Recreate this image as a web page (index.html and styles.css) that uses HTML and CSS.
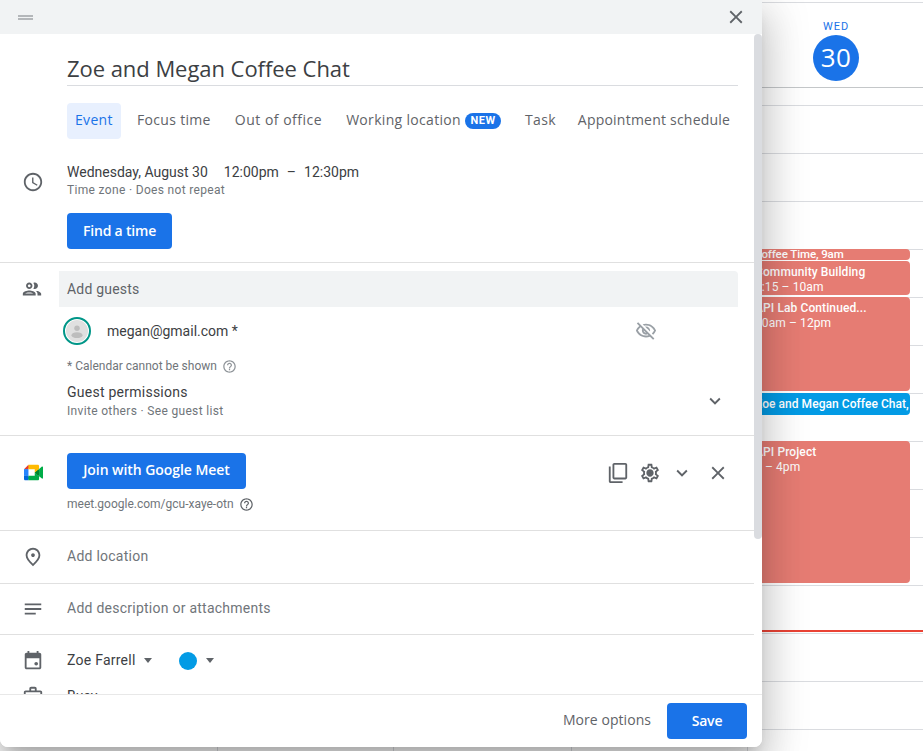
FILE: index.html
```html
<!DOCTYPE html>
<html lang="en">
<head>
<meta charset="utf-8">
<title>Zoe and Megan Coffee Chat</title>
<link rel="stylesheet" href="styles.css">
</head>
<body>
<svg class="sprite" aria-hidden="true">
  <symbol id="i-close" viewBox="0 0 24 24"><path d="M19 6.41L17.59 5 12 10.59 6.41 5 5 6.41 10.59 12 5 17.59 6.41 19 12 13.41 17.59 19 19 17.59 13.41 12z"/></symbol>
  <symbol id="i-chevron" viewBox="0 0 24 24"><path d="M7.41 8.59L12 13.17l4.59-4.58L18 10l-6 6-6-6z"/></symbol>
  <symbol id="i-help" viewBox="0 0 24 24"><path d="M11 18h2v-2h-2v2zm1-16C6.48 2 2 6.48 2 12s4.48 10 10 10 10-4.48 10-10S17.52 2 12 2zm0 18c-4.41 0-8-3.59-8-8s3.59-8 8-8 8 3.59 8 8-3.59 8-8 8zm0-14c-2.21 0-4 1.79-4 4h2c0-1.1.9-2 2-2s2 .9 2 2c0 2-3 1.75-3 5h2c0-2.25 3-2.5 3-5 0-2.21-1.79-4-4-4z"/></symbol>
</svg>

<div class="calendar">
  <header class="cal-head">
    <div class="today">
      <span class="today-day">WED</span>
      <span class="today-num">30</span>
    </div>
  </header>
  <div class="days">
    <div class="day"></div>
    <div class="day"></div>
    <div class="day"></div>
    <div class="day day-wed">
      <div class="event event-coffee"><b>Coffee Time, 9am</b></div>
      <div class="event event-community"><b>Community Building</b><span>9:15 – 10am</span></div>
      <div class="event event-lab"><b>API Lab Continued...</b><span>10am – 12pm</span></div>
      <div class="event event-zoe"><b>Zoe and Megan Coffee Chat, 12pm</b></div>
      <div class="event event-project"><b>API Project</b><span>1 – 4pm</span></div>
      <div class="now-line"></div>
    </div>
  </div>
</div>

<div class="dialog">
  <div class="dialog-top">
    <span class="drag"></span>
    <svg class="icon close-top"><use href="#i-close"/></svg>
  </div>
  <div class="dialog-middle">
    <div class="scroll">
      <div class="title">Zoe and Megan Coffee Chat</div>
      <div class="tabs">
        <span class="tab tab-active">Event</span>
        <span class="tab">Focus time</span>
        <span class="tab tab-ooo">Out of office</span>
        <span class="tab">Working location<em class="new">NEW</em></span>
        <span class="tab">Task</span>
        <span class="tab tab-last">Appointment schedule</span>
      </div>

      <section class="sec sec-when">
        <div class="icon-cell">
          <svg class="icon" viewBox="0 0 24 24"><path d="M11.99 2C6.47 2 2 6.48 2 12s4.47 10 9.99 10C17.52 22 22 17.52 22 12S17.52 2 11.99 2zM12 20c-4.42 0-8-3.58-8-8s3.58-8 8-8 8 3.58 8 8-3.58 8-8 8zm.5-13H11v6l5.25 3.15.75-1.23-4.5-2.67z"/></svg>
        </div>
        <div class="sec-main">
          <div class="line when-line"><span>Wednesday, August 30</span><span>12:00pm</span><span>–</span><span>12:30pm</span></div>
          <div class="sub sub-wide">Time zone · Does not repeat</div>
          <button class="btn btn-find">Find a time</button>
        </div>
      </section>

      <section class="sec sec-guests">
        <div class="icon-cell cell-guests">
          <svg class="icon" viewBox="0 0 24 24"><path d="M9 13.75c-2.34 0-7 1.17-7 3.5V19h14v-1.75c0-2.33-4.66-3.5-7-3.5zM4.34 17c.84-.58 2.87-1.25 4.66-1.25s3.82.67 4.66 1.25H4.34zM9 12c1.93 0 3.5-1.57 3.5-3.5S10.93 5 9 5 5.5 6.57 5.5 8.5 7.07 12 9 12zm0-5c.83 0 1.5.67 1.5 1.5S9.83 10 9 10s-1.5-.67-1.5-1.5S8.17 7 9 7zm7.04 6.81c1.16.84 1.96 1.96 1.96 3.44V19h4v-1.75c0-2.02-3.5-3.17-5.96-3.44zM15 12c1.93 0 3.5-1.57 3.5-3.5S16.93 5 15 5c-.54 0-1.04.13-1.5.35.63.89 1 1.98 1 3.15s-.37 2.26-1 3.15c.46.22.96.35 1.5.35z"/></svg>
        </div>
        <div class="sec-main">
          <div class="guest-input">Add guests</div>
          <div class="guest">
            <span class="avatar">
              <svg viewBox="0 0 24 24"><circle cx="12" cy="12" r="12" fill="#e0e0e0"/><circle cx="12" cy="9" r="3" fill="#bdbdbd"/><ellipse cx="12" cy="16.5" rx="6" ry="3.2" fill="#bdbdbd"/></svg>
            </span>
            <span class="guest-mail">megan@gmail.com *</span>
            <svg class="icon icon-eye" viewBox="0 0 24 24"><path d="M12 6c3.79 0 7.17 2.13 8.82 5.5-.59 1.22-1.42 2.27-2.41 3.12l1.41 1.41c1.39-1.23 2.49-2.77 3.18-4.53C21.27 7.11 17 4 12 4c-1.27 0-2.49.2-3.64.57l1.65 1.65C10.66 6.09 11.32 6 12 6zm-1.07 1.14L13 9.21c.57.25 1.03.71 1.28 1.28l2.07 2.07c.08-.34.14-.7.14-1.07C16.5 9.01 14.48 7 12 7c-.37 0-.72.05-1.07.14zM2.01 3.87l2.68 2.68C3.06 7.83 1.77 9.53 1 11.5 2.73 15.89 7 19 12 19c1.52 0 2.98-.29 4.32-.82l3.42 3.42 1.41-1.41L3.42 2.45 2.01 3.87zm7.5 7.5l2.61 2.61c-.04.01-.08.02-.12.02-1.38 0-2.5-1.12-2.5-2.5 0-.05.01-.08.01-.13zm-3.4-3.4l1.75 1.75c-.23.55-.36 1.15-.36 1.78 0 2.48 2.02 4.5 4.5 4.5.63 0 1.23-.13 1.77-.36l.98.98c-.88.24-1.8.38-2.75.38-3.79 0-7.17-2.13-8.82-5.5.7-1.43 1.72-2.61 2.93-3.53z"/></svg>
          </div>
          <div class="sub note">* Calendar cannot be shown<svg class="icon-help"><use href="#i-help"/></svg></div>
          <div class="perm-row">
            <div>
              <div class="line perm-title">Guest permissions</div>
              <div class="sub sub-wide perm-sub">Invite others · See guest list</div>
            </div>
            <svg class="icon"><use href="#i-chevron"/></svg>
          </div>
        </div>
      </section>

      <section class="sec sec-meet">
        <div class="icon-cell cell-meet">
          <svg class="meet-logo" viewBox="0 0 87.5 72">
            <path fill="#00832d" d="M49.5 36l8.53 9.75 11.47 7.33 2-17.02-2-16.64-11.69 6.44z"/>
            <path fill="#0066da" d="M0 51.5V66c0 3.315 2.685 6 6 6h14.5l3-10.96-3-9.54-9.95-3z"/>
            <path fill="#e53935" d="M20.5 0L0 20.5l10.55 3 9.95-3 2.95-9.41z"/>
            <path fill="#2684fc" d="M20.5 20.5H0v31h20.5z"/>
            <path fill="#00ac47" d="M82.6 8.68L69.5 19.42v33.66l13.16 10.79c1.97 1.54 4.85.135 4.85-2.37V11c0-2.535-2.945-3.925-4.91-2.32zM49.5 36v15.5h-29V72h43c3.315 0 6-2.685 6-6V53.08z"/>
            <path fill="#ffba00" d="M63.5 0h-43v20.5h29V36l20-16.57V6c0-3.315-2.685-6-6-6z"/>
          </svg>
        </div>
        <div class="sec-main">
          <div class="meet-row">
            <button class="btn btn-meet">Join with Google Meet</button>
            <div class="meet-actions">
              <svg class="icon" viewBox="0 0 24 24"><path d="M4 5H2v16c0 1.1.9 2 2 2h13v-2H4V5zm16-4H8c-1.1 0-2 .9-2 2v14c0 1.1.9 2 2 2h12c1.1 0 2-.9 2-2V3c0-1.1-.9-2-2-2zm0 16H8V3h12v14z"/></svg>
              <svg class="icon" viewBox="0 0 24 24"><path d="M19.43 12.98c.04-.32.07-.64.07-.98 0-.34-.03-.66-.07-.98l2.11-1.65c.19-.15.24-.42.12-.64l-2-3.46c-.09-.16-.26-.25-.44-.25-.06 0-.12.01-.17.03l-2.49 1c-.52-.4-1.08-.73-1.69-.98l-.38-2.65C14.46 2.18 14.25 2 14 2h-4c-.25 0-.46.18-.49.42l-.38 2.65c-.61.25-1.17.59-1.69.98l-2.49-1c-.06-.02-.12-.03-.18-.03-.17 0-.34.09-.43.25l-2 3.46c-.13.22-.07.49.12.64l2.11 1.65c-.04.32-.07.65-.07.98 0 .33.03.66.07.98l-2.11 1.65c-.19.15-.24.42-.12.64l2 3.46c.09.16.26.25.44.25.06 0 .12-.01.17-.03l2.49-1c.52.4 1.08.73 1.69.98l.38 2.65c.03.24.24.42.49.42h4c.25 0 .46-.18.49-.42l.38-2.65c.61-.25 1.17-.59 1.69-.98l2.49 1c.06.02.12.03.18.03.17 0 .34-.09.43-.25l2-3.46c.12-.22.07-.49-.12-.64l-2.11-1.65zm-1.98-1.71c.04.31.05.52.05.73 0 .21-.02.43-.05.73l-.14 1.13.89.7 1.08.84-.7 1.21-1.27-.51-1.04-.42-.9.68c-.43.32-.84.56-1.25.73l-1.06.43-.16 1.13-.2 1.35h-1.4l-.19-1.35-.16-1.13-1.06-.43c-.43-.18-.83-.41-1.23-.71l-.91-.7-1.06.43-1.27.51-.7-1.21 1.08-.84.89-.7-.14-1.13c-.03-.31-.05-.54-.05-.74s.02-.43.05-.73l.14-1.13-.89-.7-1.08-.84.7-1.21 1.27.51 1.04.42.9-.68c.43-.32.84-.56 1.25-.73l1.06-.43.16-1.13.2-1.35h1.39l.19 1.35.16 1.13 1.06.43c.43.18.83.41 1.23.71l.91.7 1.06-.43 1.27-.51.7 1.21-1.07.85-.89.7.14 1.13zM12 8c-2.21 0-4 1.79-4 4s1.79 4 4 4 4-1.79 4-4-1.79-4-4-4zm0 6c-1.1 0-2-.9-2-2s.9-2 2-2 2 .9 2 2-.9 2-2 2z"/><circle cx="12" cy="12" r="2.5"/></svg>
              <svg class="icon"><use href="#i-chevron"/></svg>
              <svg class="icon icon-meet-close"><use href="#i-close"/></svg>
            </div>
          </div>
          <div class="sub meet-url">meet.google.com/gcu-xaye-otn<svg class="icon-help icon-help-dark"><use href="#i-help"/></svg></div>
        </div>
      </section>

      <section class="sec sec-location">
        <div class="icon-cell">
          <svg class="icon" viewBox="0 0 24 24"><path d="M12 12c-1.1 0-2-.9-2-2s.9-2 2-2 2 .9 2 2-.9 2-2 2zm6-1.8C18 6.57 15.35 4 12 4s-6 2.57-6 6.2c0 2.34 1.95 5.44 6 9.14 4.05-3.7 6-6.8 6-9.14zM12 2c4.2 0 8 3.22 8 8.2 0 3.32-2.67 7.25-8 11.8-5.33-4.55-8-8.48-8-11.8C4 5.22 7.8 2 12 2z"/></svg>
        </div>
        <div class="placeholder">Add location</div>
      </section>

      <section class="sec sec-desc">
        <div class="icon-cell">
          <svg class="icon" viewBox="0 0 24 24"><path d="M3 18h12v-2H3v2zM3 6v2h18V6H3zm0 7h18v-2H3v2z"/></svg>
        </div>
        <div class="placeholder">Add description or attachments</div>
      </section>

      <section class="sec sec-cal">
        <div class="icon-cell cell-cal">
          <svg class="icon" viewBox="0 0 24 24"><path d="M16 1v2H8V1H6v2H5c-1.11 0-1.99.9-1.99 2L3 19c0 1.1.89 2 2 2h14c1.1 0 2-.9 2-2V5c0-1.1-.9-2-2-2h-1V1h-2zm3 18H5V9h14v10z"/><circle cx="15.5" cy="15" r="2"/></svg>
        </div>
        <div class="cal-row">
          <span class="line cal-name">Zoe Farrell</span>
          <span class="caret"></span>
          <span class="dot"></span>
          <span class="caret"></span>
        </div>
      </section>
      <section class="sec sec-busy">
        <div class="icon-cell">
          <svg class="icon" viewBox="0 0 24 24"><path d="M14 6V4h-4v2h4zM4 8v11h16V8H4zm16-2c1.11 0 2 .89 2 2v11c0 1.11-.89 2-2 2H4c-1.11 0-2-.89-2-2l.01-11c0-1.11.88-2 1.99-2h4V4c0-1.11.89-2 2-2h4c1.11 0 2 .89 2 2v2h4z"/></svg>
        </div>
        <span class="line">Busy</span>
      </section>
    </div>
    <div class="scrollbar"><div class="thumb"></div></div>
  </div>
  <footer class="dialog-foot">
    <span class="more">More options</span>
    <button class="btn btn-save">Save</button>
  </footer>
</div>
</body>
</html>
```
FILE: styles.css
```css
* { box-sizing: border-box; }
html, body { margin: 0; height: 100%; }
body {
  position: relative;
  height: 751px;
  overflow: hidden;
  background: #fff;
  font-family: Roboto, "Liberation Sans", sans-serif;
  color: #3c4043;
}
.sprite { display: none; }

/* calendar behind the dialog */
.calendar { height: 751px; display: flex; flex-direction: column; padding-top: 2px; }
.cal-head {
  height: 86px;
  border-top: 1px solid #dadce0;
  border-bottom: 1px solid #c4c7c9;
  display: flex;
  justify-content: flex-end;
}
.today { width: 174px; display: flex; flex-direction: column; align-items: center; padding-top: 17px; }
.today-day { font-size: 11px; font-weight: 400; line-height: 14px; letter-spacing: 1px; color: #1a73e8; }
.today-num {
  margin-top: 1px;
  width: 46px; height: 46px; border-radius: 50%;
  background: #1a73e8; color: #fff;
  font: 26px/44px "Open Sans", sans-serif;
  letter-spacing: .5px;
  text-align: center;
}
.days {
  flex: 1;
  display: flex;
  justify-content: flex-end;
  background: linear-gradient(to bottom, transparent 47px, #dadce0 47px) 0 -30px / 100% 48px;
}
.day { width: 176px; border-left: 1px solid #dadce0; }
.day:nth-child(2) { width: 178px; }
.day-wed { position: relative; }
.event {
  position: absolute;
  left: 3px;
  width: 159px;
  padding: 4px 0 0 4px;
  border-radius: 4px;
  background: #e67c73;
  color: #fff;
  font-size: 12px;
  line-height: 15px;
  letter-spacing: .1px;
  overflow: hidden;
  white-space: nowrap;
}
.event b { display: block; font-weight: 500; }
.event span { display: block; }
.event-coffee { top: 161px; height: 11px; padding-top: 0; padding-left: 3px; font-size: 11.5px; line-height: 11px; letter-spacing: -.1px; }
.event-community { top: 173px; height: 34px; }
.event-lab { top: 209px; height: 94px; }
.event-zoe { top: 305px; height: 22px; background: #039be5; letter-spacing: .05px; }
.event-project { top: 353px; height: 142px; }
.now-line { position: absolute; left: 0; right: 0; top: 542px; height: 2px; background: #ea4335; }

/* dialog */
.dialog {
  position: absolute;
  left: 0; top: 0;
  width: 762px; height: 747px;
  display: flex;
  flex-direction: column;
  background: #fff;
  border-radius: 0 0 8px 8px;
  box-shadow: 0 24px 38px 3px rgba(0,0,0,.14), 0 9px 46px 8px rgba(0,0,0,.12), 0 11px 15px -7px rgba(0,0,0,.2);
}
.dialog-top {
  height: 34px; flex: none;
  background: #f1f3f4;
  display: flex;
  align-items: center;
  justify-content: space-between;
  padding: 0 15px 2px 18px;
}
.drag { width: 15px; height: 5px; border-top: 2px solid #b4b7ba; border-bottom: 2px solid #b4b7ba; margin-top: 3px; }
.icon { width: 22px; height: 22px; fill: #5f6368; flex: none; display: block; }
.close-top { margin-top: 2px; }
.dialog-middle { flex: 1; min-height: 0; display: flex; }
.scroll { flex: 1; min-width: 0; overflow: hidden; }
.scrollbar { width: 8px; flex: none; }
.thumb { height: 505px; background: #dadce0; border-radius: 4px; }

.title {
  margin: 0 16px 0 67px;
  height: 52px;
  padding-top: 19px;
  border-bottom: 1px solid #dadce0;
  font: 22px/30px "Open Sans", sans-serif;
  letter-spacing: -.05px;
  color: #3c4043;
}
.tabs { display: flex; gap: 8px; margin: 17px 0 0 67px; }
.tab {
  height: 36px; padding: 0 8px 2px;
  display: flex; align-items: center;
  border-radius: 4px;
  font: 500 14px/34px "Open Sans", sans-serif;
  letter-spacing: .32px;
  color: #5f6368;
  white-space: nowrap;
}
.tab-active { background: #e8f0fe; color: #1a73e8; width: 54px; }
.tab-ooo { letter-spacing: .5px; }
.tab-last { margin-left: -2px; letter-spacing: .22px; }
.new {
  margin: 2px 0 0 4px;
  height: 16px; width: 36px;
  border-radius: 8px;
  background: #1a73e8; color: #fff;
  font: 700 11px/16px Roboto, sans-serif;
  letter-spacing: .5px;
  text-align: center;
}

.sec { display: flex; border-bottom: 1px solid #e0e0e0; }
.icon-cell { width: 67px; flex: none; display: flex; justify-content: center; padding-right: 1px; }
.sec-main { flex: 1; min-width: 0; padding-right: 16px; }
.line { font-size: 14px; line-height: 20px; color: #3c4043; }
.sub { font-size: 12px; line-height: 16px; color: #70757a; }
.sub-wide { letter-spacing: .33px; }

.btn {
  height: 36px; padding: 0;
  border: 0; border-radius: 4px;
  background: #1a73e8; color: #fff;
  font: 600 14px/36px "Open Sans", sans-serif;
  letter-spacing: -.2px;
  display: block;
}

.sec-when { margin-top: 23px; padding-bottom: 13px; }
.sec-when .icon-cell { padding-top: 9px; }
.when-line { display: flex; }
.when-line span:nth-child(2) { margin-left: 16px; }
.when-line span:nth-child(3) { margin-left: 8px; }
.when-line span:nth-child(4) { margin-left: 8px; }
.btn-find { width: 105px; margin-top: 15px; }

.sec-guests { padding: 8px 0 16px; }
.cell-guests { width: 59px; padding: 7px 4px 0 8px; }
.guest-input {
  height: 36px;
  padding-left: 8px;
  background: #f1f3f4;
  border-radius: 0 4px 0 0;
  font-size: 14px; line-height: 36px;
  letter-spacing: .2px;
  color: #5f6368;
}
.guest { display: flex; align-items: center; height: 28px; margin-top: 10px; padding: 0 81px 0 4px; }
.avatar { width: 28px; height: 28px; border: 2px solid #009688; border-radius: 50%; padding: 1px; flex: none; }
.avatar svg { display: block; width: 100%; height: 100%; }
.guest-mail { margin-left: 16px; font-size: 14px; color: #3c4043; flex: 1; }
.icon-eye { fill: #9aa0a6; }
.note { display: flex; align-items: center; margin: 13px 0 0 8px; }
.icon-help { width: 15px; height: 15px; fill: #8f9499; margin-left: 5px; display: block; flex: none; }
.icon-help-dark { fill: #5f6368; }
.perm-row { display: flex; align-items: center; justify-content: space-between; margin: 8px 0 0 8px; padding-right: 12px; }
.perm-title { letter-spacing: .25px; }
.perm-sub { margin-top: 1px; }

.sec-meet { padding: 17px 0 18px; }
.cell-meet { padding-top: 11px; }
.meet-logo { width: 19px; height: 17px; display: block; }
.meet-row { display: flex; justify-content: space-between; align-items: center; padding-right: 9px; }
.btn-meet { width: 179px; padding-bottom: 2px; line-height: 34px; letter-spacing: -.05px; }
.meet-actions { display: flex; gap: 10px; margin-top: 4px; }
.icon-meet-close { margin-left: 4px; }
.meet-url { display: flex; align-items: center; margin-top: 7px; }

.placeholder { font-size: 14px; letter-spacing: .25px; color: #70757a; padding-bottom: 2px; }
.sec-location { height: 53px; align-items: center; }
.sec-desc { height: 51px; align-items: center; }
.sec-cal { height: 50px; align-items: center; border-bottom: 0; }
.cell-cal { padding-top: 2px; }
.sec-busy { height: 20px; align-items: center; border-bottom: 0; margin-top: 1px; }
.cal-row { display: flex; align-items: center; }
.cal-name { letter-spacing: .25px; }
.caret { width: 0; height: 0; border: 4.5px solid transparent; border-top: 5px solid #5f6368; border-bottom: 0; margin-left: 8px; }
.dot { width: 18px; height: 18px; border-radius: 50%; background: #039be5; margin: 2px 0 0 27px; }
.dot + .caret { margin-left: 9px; }

.dialog-foot {
  flex: none;
  height: 53px;
  display: flex;
  align-items: center;
  justify-content: flex-end;
  padding: 0 15px;
  border-top: 1px solid #e8e8e8;
  background: #fff;
  border-radius: 0 0 8px 8px;
}
.more { font: 500 14px/34px "Open Sans", sans-serif; letter-spacing: .05px; color: #5f6368; margin-right: 16px; padding-bottom: 2px; }
.btn-save { width: 80px; }
```
